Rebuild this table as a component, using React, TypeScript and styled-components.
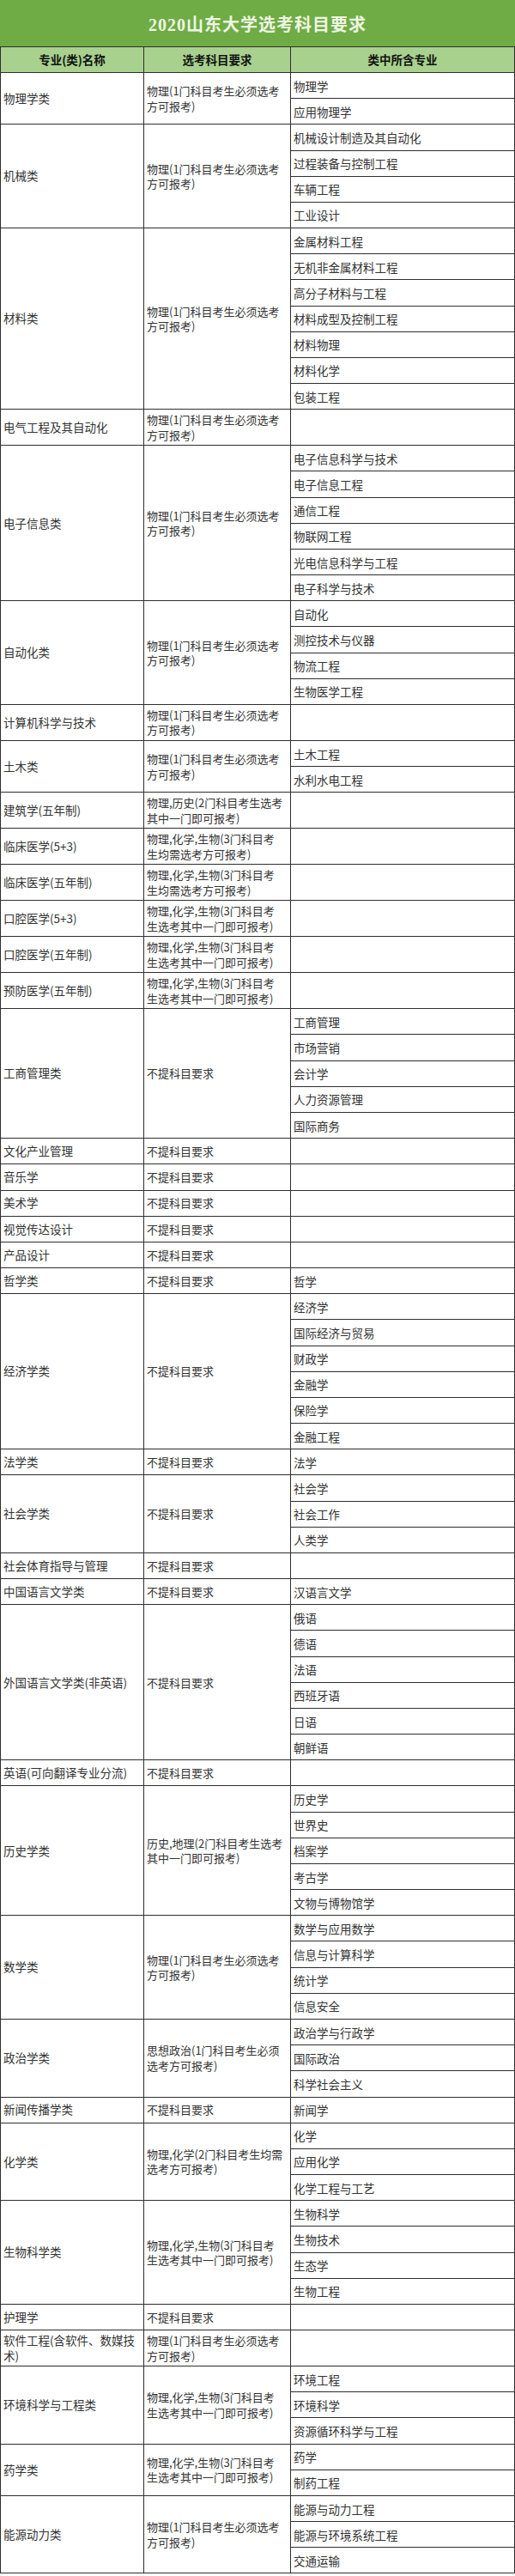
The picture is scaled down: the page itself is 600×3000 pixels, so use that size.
import React from 'react';
import styled, { createGlobalStyle } from 'styled-components';

const GlobalStyle = createGlobalStyle`
  html, body { margin: 0; padding: 0; background: #fff; }
  body { font-family: "Noto Sans CJK SC", "Liberation Sans", sans-serif; }
  #root { width: 600px; }
`;

type Major = { name: string; req: string; subs: string[] };

const PHY = '物理(1门科目考生必须选考\n方可报考)';
const NONE = '不提科目要求';
const THREE_ANY = '物理,化学,生物(3门科目考\n生选考其中一门即可报考)';
const THREE_ALL = '物理,化学,生物(3门科目考\n生均需选考方可报考)';

const majors: Major[] = [
  { name: '物理学类', req: PHY, subs: ['物理学', '应用物理学'] },
  { name: '机械类', req: PHY, subs: ['机械设计制造及其自动化', '过程装备与控制工程', '车辆工程', '工业设计'] },
  {
    name: '材料类',
    req: PHY,
    subs: ['金属材料工程', '无机非金属材料工程', '高分子材料与工程', '材料成型及控制工程', '材料物理', '材料化学', '包装工程'],
  },
  { name: '电气工程及其自动化', req: PHY, subs: [] },
  {
    name: '电子信息类',
    req: PHY,
    subs: ['电子信息科学与技术', '电子信息工程', '通信工程', '物联网工程', '光电信息科学与工程', '电子科学与技术'],
  },
  { name: '自动化类', req: PHY, subs: ['自动化', '测控技术与仪器', '物流工程', '生物医学工程'] },
  { name: '计算机科学与技术', req: PHY, subs: [] },
  { name: '土木类', req: PHY, subs: ['土木工程', '水利水电工程'] },
  { name: '建筑学(五年制)', req: '物理,历史(2门科目考生选考\n其中一门即可报考)', subs: [] },
  { name: '临床医学(5+3)', req: THREE_ALL, subs: [] },
  { name: '临床医学(五年制)', req: THREE_ALL, subs: [] },
  { name: '口腔医学(5+3)', req: THREE_ANY, subs: [] },
  { name: '口腔医学(五年制)', req: THREE_ANY, subs: [] },
  { name: '预防医学(五年制)', req: THREE_ANY, subs: [] },
  { name: '工商管理类', req: NONE, subs: ['工商管理', '市场营销', '会计学', '人力资源管理', '国际商务'] },
  { name: '文化产业管理', req: NONE, subs: [] },
  { name: '音乐学', req: NONE, subs: [] },
  { name: '美术学', req: NONE, subs: [] },
  { name: '视觉传达设计', req: NONE, subs: [] },
  { name: '产品设计', req: NONE, subs: [] },
  { name: '哲学类', req: NONE, subs: ['哲学'] },
  { name: '经济学类', req: NONE, subs: ['经济学', '国际经济与贸易', '财政学', '金融学', '保险学', '金融工程'] },
  { name: '法学类', req: NONE, subs: ['法学'] },
  { name: '社会学类', req: NONE, subs: ['社会学', '社会工作', '人类学'] },
  { name: '社会体育指导与管理', req: NONE, subs: [] },
  { name: '中国语言文学类', req: NONE, subs: ['汉语言文学'] },
  { name: '外国语言文学类(非英语)', req: NONE, subs: ['俄语', '德语', '法语', '西班牙语', '日语', '朝鲜语'] },
  { name: '英语(可向翻译专业分流)', req: NONE, subs: [] },
  {
    name: '历史学类',
    req: '历史,地理(2门科目考生选考\n其中一门即可报考)',
    subs: ['历史学', '世界史', '档案学', '考古学', '文物与博物馆学'],
  },
  { name: '数学类', req: PHY, subs: ['数学与应用数学', '信息与计算科学', '统计学', '信息安全'] },
  { name: '政治学类', req: '思想政治(1门科目考生必须\n选考方可报考)', subs: ['政治学与行政学', '国际政治', '科学社会主义'] },
  { name: '新闻传播学类', req: NONE, subs: ['新闻学'] },
  { name: '化学类', req: '物理,化学(2门科目考生均需\n选考方可报考)', subs: ['化学', '应用化学', '化学工程与工艺'] },
  { name: '生物科学类', req: THREE_ANY, subs: ['生物科学', '生物技术', '生态学', '生物工程'] },
  { name: '护理学', req: NONE, subs: [] },
  { name: '软件工程(含软件、数媒技\n术)', req: PHY, subs: [] },
  { name: '环境科学与工程类', req: THREE_ANY, subs: ['环境工程', '环境科学', '资源循环科学与工程'] },
  { name: '药学类', req: THREE_ANY, subs: ['药学', '制药工程'] },
  { name: '能源动力类', req: PHY, subs: ['能源与动力工程', '能源与环境系统工程', '交通运输'] },
];

const LINE = '#2e2e2e';

const Page = styled.div`
  width: 600px;
`;

const Title = styled.h1`
  margin: 0;
  height: 54px;
  border-bottom: 1px solid ${LINE};
  background: #6fac46;
  color: #eef5e2;
  display: flex;
  align-items: center;
  justify-content: center;
  font-family: "Liberation Serif", "Noto Sans CJK SC", serif;
  font-size: 20px;
  font-weight: 700;
  letter-spacing: 1px;
`;

const Table = styled.div`
  box-sizing: border-box;
  width: 600px;
  border-left: 1px solid ${LINE};
  border-right: 1px solid ${LINE};
  border-bottom: 1px solid ${LINE};
`;

const Row = styled.div<{ $head?: boolean }>`
  display: grid;
  grid-template-columns: 166px 171px 1fr;
  border-top: ${(p) => (p.$head ? 'none' : `1px solid ${LINE}`)};
  background: ${(p) => (p.$head ? '#a9d18e' : '#fff')};
  min-height: ${(p) => (p.$head ? '29px' : '0')};
`;

const Cell = styled.div<{ $first?: boolean }>`
  box-sizing: border-box;
  display: flex;
  align-items: center;
  padding: 3px 3px;
  border-left: ${(p) => (p.$first ? 'none' : `1px solid ${LINE}`)};
  color: #333;
  font-size: ${(p) => (p.$first ? '13.5px' : '13px')};
  line-height: 17.5px;
  white-space: pre;
`;

const HeadCell = styled(Cell)`
  justify-content: center;
  color: #111;
  font-size: 13.5px;
  font-weight: 700;
`;

const SubList = styled.div`
  display: flex;
  flex-direction: column;
  border-left: 1px solid ${LINE};
`;

const SubItem = styled.div`
  height: 29.18px;
  display: flex;
  align-items: center;
  padding: 0 3px;
  color: #333;
  font-size: 13.5px;
  white-space: nowrap;

  & + & {
    border-top: 1px solid ${LINE};
  }
`;

const MajorRow = ({ m }: { m: Major }) => (
  <Row>
    <Cell $first>{m.name}</Cell>
    <Cell>{m.req}</Cell>
    <SubList>
      {m.subs.length === 0 ? <SubItem /> : m.subs.map((s) => <SubItem key={s}>{s}</SubItem>)}
    </SubList>
  </Row>
);

export default function App() {
  return (
    <Page>
      <GlobalStyle />
      <Title>2020山东大学选考科目要求</Title>
      <Table>
        <Row $head>
          <HeadCell $first>专业(类)名称</HeadCell>
          <HeadCell>选考科目要求</HeadCell>
          <HeadCell>类中所含专业</HeadCell>
        </Row>
        {majors.map((m) => (
          <MajorRow key={m.name} m={m} />
        ))}
      </Table>
    </Page>
  );
}
